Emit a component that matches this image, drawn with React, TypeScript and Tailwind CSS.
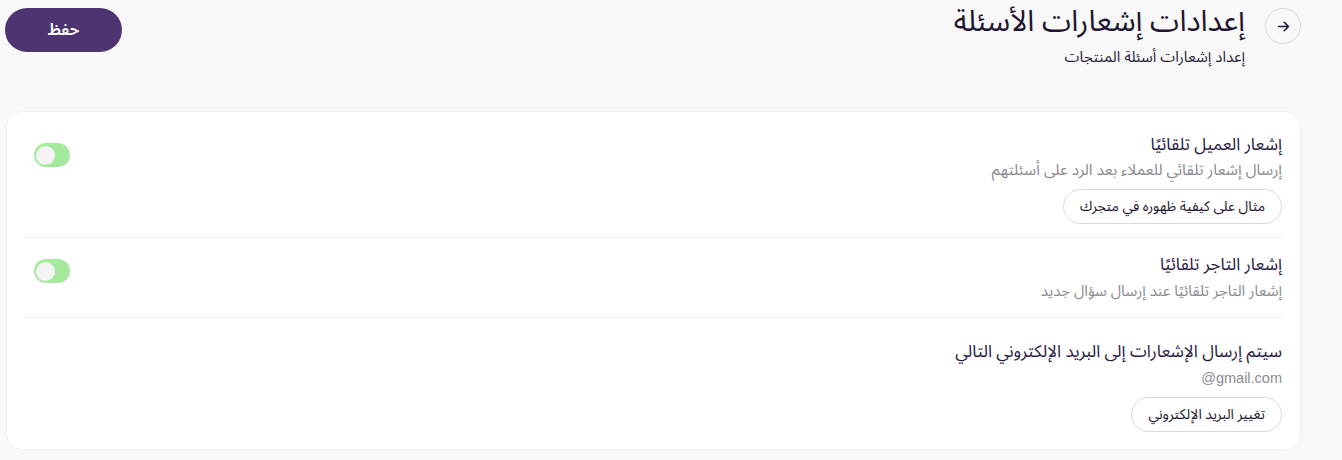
import React, { useState } from 'react';

const Toggle = ({ on, onChange }: { on: boolean; onChange: () => void }) => (
  <button
    type="button"
    onClick={onChange}
    dir="ltr"
    className={`w-9 h-6 rounded-full flex items-center px-[2px] ${on ? 'bg-[#a5e99c]' : 'bg-gray-300'}`}
  >
    <span className="size-[19px] rounded-full bg-[#f4f4f6]" />
  </button>
)

const App = () => {
  const [customer, setCustomer] = useState(true)
  const [merchant, setMerchant] = useState(true)

  return (
    <div
      dir="rtl"
      className="min-h-[460px] bg-[#f8f8f8] pr-[41px] pl-[5px] pt-2 text-[#2a1f3d]"
      style={{ fontFamily: '"Noto Sans Arabic", "DejaVu Sans", "Noto Sans", sans-serif' }}
    >
      {/* HEADER */}
      <div className="flex items-start justify-between">
        <div className="flex items-start gap-5">
          <button className="size-9 rounded-full border border-[#dcd8e4] flex items-center justify-center shrink-0">
            <svg width="17" height="17" viewBox="0 0 24 24" fill="none" stroke="#1e1530" strokeWidth="2.2" strokeLinecap="round" strokeLinejoin="round">
              <path d="M5 12h14M13 6l6 6-6 6" />
            </svg>
          </button>
          <div className="flex flex-col">
            <h1 className="text-[29.5px] leading-[44px] text-[#1e1530] -mt-[8px]">إعدادات إشعارات الأسئلة</h1>
            <p className="text-[15px] leading-6 mt-[1px] text-[#2a1f3d]">إعداد إشعارات أسئلة المنتجات</p>
          </div>
        </div>
        <button className="w-[117px] h-11 rounded-full bg-[#4e3571] text-white text-[16px] font-semibold">حفظ</button>
      </div>

      {/* CARD */}
      <div className="mt-[42px] ml-[1px] bg-white rounded-2xl border border-[#f1f1f3] pr-[18px] pl-[18px]">
        <div className="flex items-start justify-between pt-[21px] pb-[13px] border-b border-[#f0f0f2]">
          <div className="flex flex-col items-start">
            <h3 className="text-[17px] leading-6 text-[#2a1a45]">إشعار العميل تلقائيًا</h3>
            <p className="text-[15.5px] leading-6 mt-[1px] text-[#8a8a8f]">إرسال إشعار تلقائي للعملاء بعد الرد على أسئلتهم</p>
            <button className="mt-[7px] h-[35px] px-[16px] rounded-full border border-[#dcd8e4] text-[14px] text-[#1e1530]">مثال على كيفية ظهوره في متجرك</button>
          </div>
          <div className="ml-[9px] mt-[10px]">
            <Toggle on={customer} onChange={() => setCustomer(!customer)} />
          </div>
        </div>

        <div className="flex items-start justify-between pt-[15px] pb-[14px] border-b border-[#f0f0f2]">
          <div className="flex flex-col items-start">
            <h3 className="text-[17px] leading-6 text-[#2a1a45]">إشعار التاجر تلقائيًا</h3>
            <p className="text-[15px] leading-6 mt-[2px] text-[#8a8a8f]">إشعار التاجر تلقائيًا عند إرسال سؤال جديد</p>
          </div>
          <div className="ml-[9px] mt-[6px]">
            <Toggle on={merchant} onChange={() => setMerchant(!merchant)} />
          </div>
        </div>

        <div className="flex flex-col items-start pt-[22px] pb-[17px]">
          <h3 className="text-[17px] leading-6 text-[#2a1a45]">سيتم إرسال الإشعارات إلى البريد الإلكتروني التالي</h3>
          <p dir="ltr" className="text-[14.5px] leading-6 mt-[2px] text-[#8a8a8f]" style={{ fontFamily: '"Liberation Sans", Arial, sans-serif' }}>@gmail.com</p>
          <button className="mt-[7px] h-[35px] px-[16px] rounded-full border border-[#dcd8e4] text-[14px] text-[#1e1530]">تغيير البريد الإلكتروني</button>
        </div>
      </div>
    </div>
  )
}

export default App
